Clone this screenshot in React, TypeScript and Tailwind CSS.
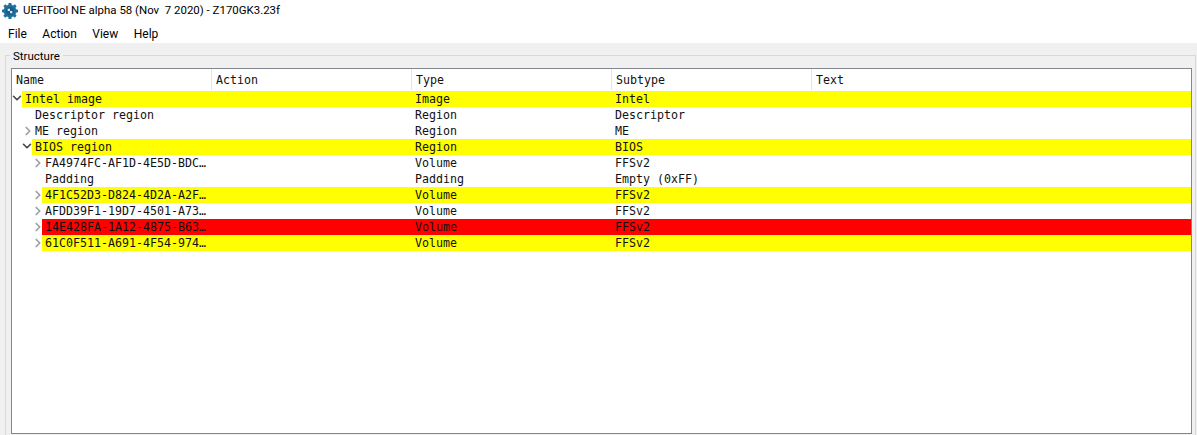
import React from "react";
import { ChevronDown, ChevronRight } from "lucide-react";

type Row = { name: string; type: string; sub: string; level: number; arrow?: "open" | "closed"; bg?: "yellow" | "red" };

const rows: Row[] = [
  { name: "Intel image", type: "Image", sub: "Intel", level: 0, arrow: "open", bg: "yellow" },
  { name: "Descriptor region", type: "Region", sub: "Descriptor", level: 1 },
  { name: "ME region", type: "Region", sub: "ME", level: 1, arrow: "closed" },
  { name: "BIOS region", type: "Region", sub: "BIOS", level: 1, arrow: "open", bg: "yellow" },
  { name: "FA4974FC-AF1D-4E5D-BDC…", type: "Volume", sub: "FFSv2", level: 2, arrow: "closed" },
  { name: "Padding", type: "Padding", sub: "Empty (0xFF)", level: 2 },
  { name: "4F1C52D3-D824-4D2A-A2F…", type: "Volume", sub: "FFSv2", level: 2, arrow: "closed", bg: "yellow" },
  { name: "AFDD39F1-19D7-4501-A73…", type: "Volume", sub: "FFSv2", level: 2, arrow: "closed" },
  { name: "14E428FA-1A12-4875-B63…", type: "Volume", sub: "FFSv2", level: 2, arrow: "closed", bg: "red" },
  { name: "61C0F511-A691-4F54-974…", type: "Volume", sub: "FFSv2", level: 2, arrow: "closed", bg: "yellow" },
];

const indent = ["pl-[10px]", "pl-[20px]", "pl-[30px]"];
const headers = ["Name", "Action", "Type", "Subtype"];

function TreeRow({ r }: { r: Row }) {
  const color = r.bg === "yellow" ? "bg-[#ffff00]" : r.bg === "red" ? "bg-[#ff0000]" : "";
  return (
    <div className={`flex h-4 ${indent[r.level]}`}>
      <div className="w-0 relative">
        {r.arrow === "open" && <ChevronDown size={14} strokeWidth={2.8} className="absolute left-[-12px] top-[0px] text-[#444]" />}
        {r.arrow === "closed" && <ChevronRight size={14} strokeWidth={3} className="absolute left-[-11px] top-[1px] text-[#a0a0a0]" />}
      </div>
      <div className={`flex flex-1 h-4 leading-4 ${color}`}>
        <div className={`pl-[3px] ${r.level === 0 ? "w-[190px]" : r.level === 1 ? "w-[180px]" : "w-[170px]"} whitespace-nowrap overflow-hidden`}>{r.name}</div>
        <div className="w-[200px]" />
        <div className="w-[200px] pl-[3px]">{r.type}</div>
        <div className="w-[200px] pl-[3px]">{r.sub}</div>
      </div>
    </div>
  );
}

export default function App() {
  return (
    <div className="w-[1197px] h-[435px] flex flex-col bg-white overflow-hidden text-black">
      <div className="h-[22px] flex items-center pl-[2px] gap-[5px] font-['Roboto',sans-serif] text-[11.45px]">
        <svg width="16" height="16" viewBox="0 0 14 14">
          <path fill="#1f6f9f" d="M5.8 0h2.4l.3 1.7 1.3.5L11.2 1.2l1.6 1.6-1 1.4.5 1.3 1.7.3v2.4l-1.7.3-.5 1.3 1 1.4-1.6 1.6-1.4-1-1.3.5-.3 1.7H5.8l-.3-1.7-1.3-.5-1.4 1-1.6-1.6 1-1.4-.5-1.3L0 8.2V5.8l1.7-.3.5-1.3-1-1.4 1.6-1.6 1.4 1 1.3-.5z" />
          <circle cx="7" cy="7" r="3.8" fill="#1a5f8c" />
          <path fill="#d5e6f0" d="M5 5h2v2h2v2H7V7H5z" />
        </svg>
        <span className="whitespace-pre">UEFITool NE alpha 58 (Nov  7 2020) - Z170GK3.23f</span>
      </div>
      <div className="h-[21px] pt-[3px] flex items-center pl-[8px] gap-[15.5px] font-['Roboto',sans-serif] text-[12px]">
        <span>File</span>
        <span>Action</span>
        <span>View</span>
        <span>Help</span>
      </div>
      <div className="flex-1 bg-[#f0f0f0] pt-[12px] pl-[5px] pr-[1px] flex flex-col min-h-0">
        <div className="relative flex-1 border-t border-l border-r border-[#d9d9d9] pt-[12px] pl-[5px] pr-[3px] flex flex-col min-h-0">
          <span className="absolute left-[4px] top-[-7px] px-[3px] bg-[#f0f0f0] leading-[14px] font-['Roboto',sans-serif] text-[11.5px]">Structure</span>
          <div className="flex-1 bg-white border border-[#828790] mb-[1px] font-['DejaVu_Sans_Mono',monospace] text-[11.63px] text-[#111] overflow-hidden">
            <div className="flex h-[22px]">
              {headers.map((h) => (
                <div key={h} className="w-[200px] h-[21px] leading-[23px] pl-[4px] border-r border-[#e5e5e5]">{h}</div>
              ))}
              <div className="h-[21px] leading-[23px] pl-[4px]">Text</div>
            </div>
            {rows.map((r) => (
              <TreeRow key={r.name} r={r} />
            ))}
          </div>
        </div>
      </div>
    </div>
  );
}
